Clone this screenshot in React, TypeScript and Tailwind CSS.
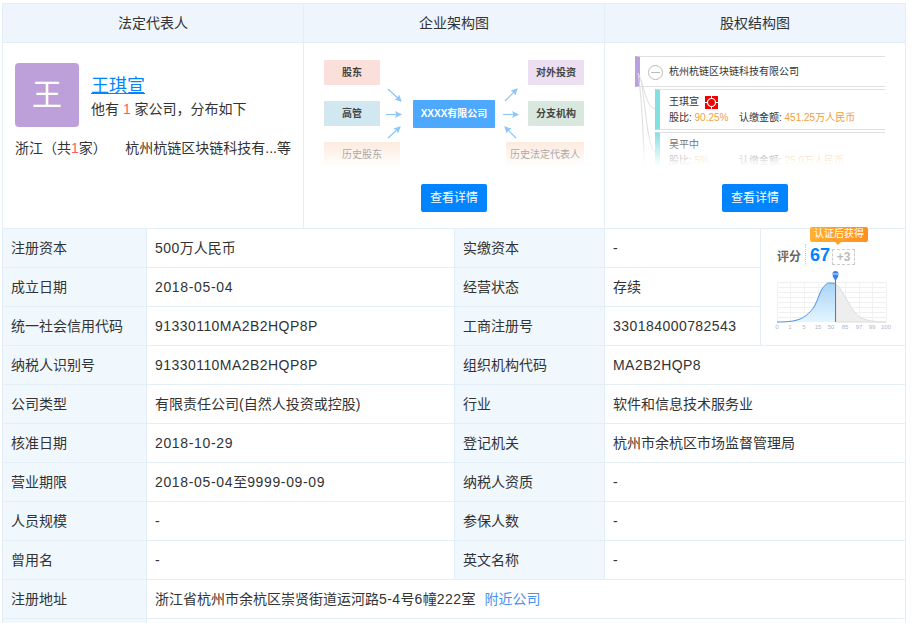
import type { ReactNode } from "react";

const FONT = "font-['Liberation_Sans','Noto_Sans_CJK_SC',sans-serif]";

function Label({ children }: { children?: ReactNode }) {
  return (
    <div className="flex items-center border-r border-b border-[#e4eef6] bg-[#f0f7fd] pl-2 text-[#333]">
      {children}
    </div>
  );
}

function Value({ children, className = "" }: { children?: ReactNode; className?: string }) {
  return (
    <div className={`flex items-center border-r border-b border-[#e4eef6] pl-2 text-[#333] ${className}`}>
      {children}
    </div>
  );
}

// latin and digits run a little wider than the cjk text around them
function Num({ children }: { children: ReactNode }) {
  return <span className="tracking-[0.45px]">{children}</span>;
}

function Day({ children }: { children: ReactNode }) {
  return <span className="tracking-[0.65px]">{children}</span>;
}

function DetailButton() {
  return (
    <button className="flex h-7 w-[66px] items-center justify-center rounded-[2px] bg-[#0084ff] text-xs text-white">
      查看详情
    </button>
  );
}

function OrgNode({ className, children }: { className: string; children: ReactNode }) {
  return (
    <div className={`absolute flex items-center justify-center rounded-[1px] pt-px text-[10px] font-bold text-[#444] ${className}`}>
      {children}
    </div>
  );
}

function OrgChart() {
  return (
    <div className="relative h-[110px] w-full">
      <OrgNode className="top-0 left-[20px] h-[25px] w-[56px] bg-[#fadfdb]">股东</OrgNode>
      <OrgNode className="top-[41px] left-[20px] h-[25px] w-[56px] bg-[#d1e8f0]">高管</OrgNode>
      <OrgNode className="top-[82px] left-[20px] h-[25px] w-[76px] bg-gradient-to-b from-[#fdeade] to-white font-normal text-[#aaa]">
        历史股东
      </OrgNode>
      <OrgNode className="top-[40px] left-[109px] h-[28px] w-[82px] bg-[#4da9ff] text-white">XXXX有限公司</OrgNode>
      <OrgNode className="top-0 left-[224px] h-[25px] w-[56px] bg-[#ecdff2]">对外投资</OrgNode>
      <OrgNode className="top-[41px] left-[224px] h-[25px] w-[56px] bg-[#d9e8df]">分支机构</OrgNode>
      <OrgNode className="top-[82px] left-[202px] h-[25px] w-[78px] bg-gradient-to-b from-[#fdeade] to-white font-normal text-[#aaa]">
        历史法定代表人
      </OrgNode>
      <svg className="absolute top-0 left-0" width="300" height="110" fill="none" stroke="#8cc6fb" strokeWidth="1.200">
        <defs>
          <marker id="arrow" markerUnits="userSpaceOnUse" markerWidth="7" markerHeight="7" refX="6" refY="3.500" orient="auto">
            <path d="M0 0L7 3.500L0 7L1.500 3.500z" fill="#8cc6fb" stroke="none" />
          </marker>
        </defs>
        <path d="M84 29L97 41" markerEnd="url(#arrow)" />
        <path d="M82 54.500H97" markerEnd="url(#arrow)" />
        <path d="M84 78L96 67" markerEnd="url(#arrow)" />
        <path d="M201 41L213 29" markerEnd="url(#arrow)" />
        <path d="M199 54.500H214" markerEnd="url(#arrow)" />
        <path d="M212 78L201 67" markerEnd="url(#arrow)" />
      </svg>
    </div>
  );
}

function RedBadge() {
  return (
    <svg width="13" height="13" viewBox="0 0 13 13" className="ml-[6px]">
      <rect width="13" height="13" fill="#f00000" />
      <circle cx="6.500" cy="6.500" r="4" fill="#f00000" stroke="#fff" strokeWidth="1.200" />
      <path d="M6.500 0V2M6.500 11V13M0 6.500H2M11 6.500H13" stroke="#fff" strokeWidth="1" />
    </svg>
  );
}

function HolderRow({ name, ratio, amount, badge }: { name: string; ratio: string; amount: string; badge?: boolean }) {
  return (
    <div className="mt-[2px] ml-[20px] h-[41px] border-y border-[#e0e0e0] border-l-[5px] border-l-[#84dfe3] pl-[9px] text-[10px] leading-[16px] text-[#333]">
      <div className="mt-[4px] flex items-center text-[#333]">
        {name}
        {badge && <RedBadge />}
      </div>
      <div className="flex whitespace-nowrap">
        <span className="w-[70px]">
          股比: <span className="text-[#f0a040]">{ratio}</span>
        </span>
        <span>
          认缴金额: <span className="text-[#f0a040]">{amount}</span>
        </span>
      </div>
    </div>
  );
}

function EquityChart() {
  return (
    <div className="relative ml-[30px] h-[110px] w-[250px] overflow-hidden">
      <svg className="absolute top-0 left-0" width="30" height="110" fill="none" stroke="#ddd">
        <path d="M3 17C10 30 10 50 20 53" />
        <path d="M6 24C10 45 12 90 20 96" />
        <path d="M3 17C8 50 8 90 10 110" />
      </svg>
      <div className="flex h-[31px] items-center border-y border-[#e0e0e0] border-l-[5px] border-l-[#b9a0e0] pt-px pl-[8px] text-[10px] text-[#333]">
        <span className="mr-[6px] flex h-[15px] w-[15px] items-center justify-center rounded-full border border-[#bbb]">
          <span className="h-px w-[9px] bg-[#bbb]" />
        </span>
        杭州杭链区块链科技有限公司
      </div>
      <HolderRow name="王琪宣" ratio="90.25%" amount="451.25万人民币" badge />
      <HolderRow name="吴平中" ratio="5%" amount="25.0万人民币" />
      <div className="absolute right-0 bottom-0 left-0 h-[34px] bg-gradient-to-b from-white/0 to-white" />
    </div>
  );
}

function ScoreChart() {
  const ticks = ["0", "1", "5", "15", "50", "85", "97", "99", "100"];
  const columns = [0, 13, 27, 41, 54, 68, 82, 95, 109];
  return (
    <svg width="109" height="60" viewBox="0 0 109 60" className="mt-[1px] block overflow-visible">
      <defs>
        <linearGradient id="bell" x1="0" y1="0" x2="0" y2="1">
          <stop offset="0" stopColor="#a9d4f8" />
          <stop offset="1" stopColor="#e4f5fe" />
        </linearGradient>
      </defs>
      {[11, 16, 21, 26, 31, 36, 41, 46].map((y) => (
        <path key={y} d={`M0 ${y}.5H109`} stroke="#f0f0f0" />
      ))}
      {columns.map((x) => (
        <path key={x} d={`M${x}.5 11V51`} stroke="#f2f2f2" />
      ))}
      <path d="M59 13C64 17 66 23 70 29C74 36 78 43 83 46C90 50 98 51 109 51H59Z" fill="#eeeeee" stroke="#dddddd" />
      <path d="M0 51C12 51 18 50 23 48C30 45 34 40 37 36C41 29 42 23 45 18C48 14 50 12 52 12C55 12 57 12 59 13V51Z" fill="url(#bell)" />
      <path d="M0 51C12 51 18 50 23 48C30 45 34 40 37 36C41 29 42 23 45 18C48 14 50 12 52 12C55 12 57 12 59 13" fill="none" stroke="#4a90e8" />
      <path d="M58.500 6V51" stroke="#3a80e8" />
      <circle cx="58.500" cy="3" r="3" fill="#3a80e8" />
      <path d="M55.500 5H61.500L58.500 10Z" fill="#3a80e8" />
      <path d="M56 3H61" stroke="#fff" strokeWidth="0.800" />
      {ticks.map((t, i) => (
        <text key={t} x={columns[i]} y="58" fontSize="6" fill="#aab8cc" textAnchor="middle">
          {t}
        </text>
      ))}
    </svg>
  );
}

function ScoreCell() {
  return (
    <div className="relative row-span-3 border-r border-b border-[#e4eef6] pl-4">
      <div className="absolute -top-[2px] left-[49px] flex h-[15px] w-[58px] items-center justify-center rounded-[2px] bg-gradient-to-r from-[#ffb032] to-[#ff8f1f] text-[10px] text-white">
        认证后获得
        <span className="absolute -bottom-[3px] left-[25px] border-x-[3px] border-t-[3px] border-x-transparent border-t-[#ff9f28]" />
      </div>
      <div className="flex h-[41px] items-end pb-[3px]">
        <span className="mb-[2px] w-[28px] text-xs font-bold text-[#666]">评分</span>
        <span className="mb-px border-l border-dotted border-[#ccc] pl-[4px] text-lg leading-[22px] font-bold text-[#0084ff]">67</span>
        <span className="mb-[2px] ml-[2px] flex h-[16px] w-[23px] items-center justify-center border border-dashed border-[#ccc] text-xs font-bold text-[#bbb]">
          +3
        </span>
      </div>
      <ScoreChart />
    </div>
  );
}

export default function App() {
  return (
    <div className={`h-[623px] overflow-hidden bg-white pt-[3px] pl-[2px] text-sm ${FONT}`}>
      <div className="w-[904px] border-t border-l border-[#e4eef6]">
        <div className="grid grid-cols-3">
          <div className="flex h-[225px] flex-col border-r border-b border-[#e4eef6]">
            <div className="flex h-[39px] items-center justify-center border-b border-[#e4eef6] bg-[#eef5fc] text-[#333]">法定代表人</div>
            <div className="px-3 pt-5 text-[#333]">
              <div className="flex items-center">
                <div className="flex h-16 w-16 items-center justify-center rounded bg-[#bd9fd9] text-[30px] text-white">王</div>
                <div className="ml-3">
                  <div className="pt-[3px] text-lg leading-[24px] text-[#0084ff] underline">王琪宣</div>
                  <div className="leading-[22px]">
                    他有 <span className="text-[#ff5a5f]">1</span> 家公司，分布如下
                  </div>
                </div>
              </div>
              <div className="mt-[11px] flex justify-between whitespace-nowrap">
                <span>
                  浙江（共<span className="text-[#ff5a5f]">1</span>家）
                </span>
                <span>杭州杭链区块链科技有...等</span>
              </div>
            </div>
          </div>
          <div className="flex h-[225px] flex-col border-r border-b border-[#e4eef6]">
            <div className="flex h-[39px] items-center justify-center border-b border-[#e4eef6] bg-[#eef5fc] text-[#333]">企业架构图</div>
            <div className="flex flex-col items-center pt-[17px]">
              <OrgChart />
              <div className="mt-[14px]">
                <DetailButton />
              </div>
            </div>
          </div>
          <div className="flex h-[225px] flex-col border-r border-b border-[#e4eef6]">
            <div className="flex h-[39px] items-center justify-center border-b border-[#e4eef6] bg-[#eef5fc] text-[#333]">股权结构图</div>
            <div className="flex flex-col items-center pt-[13px]">
              <div className="w-full">
                <EquityChart />
              </div>
              <div className="mt-[18px]">
                <DetailButton />
              </div>
            </div>
          </div>
        </div>
        <div className="grid grid-cols-[144px_308px_150px_156px_145px] auto-rows-[39px]">
          <Label>注册资本</Label>
          <Value><Num>500</Num>万人民币</Value>
          <Label>实缴资本</Label>
          <Value>-</Value>
          <ScoreCell />
          <Label>成立日期</Label>
          <Value><Day>2018-05-04</Day></Value>
          <Label>经营状态</Label>
          <Value>存续</Value>
          <Label>统一社会信用代码</Label>
          <Value><Num>91330110MA2B2HQP8P</Num></Value>
          <Label>工商注册号</Label>
          <Value><Num>330184000782543</Num></Value>
          <Label>纳税人识别号</Label>
          <Value><Num>91330110MA2B2HQP8P</Num></Value>
          <Label>组织机构代码</Label>
          <Value className="col-span-2"><Num>MA2B2HQP8</Num></Value>
          <Label>公司类型</Label>
          <Value>有限责任公司(自然人投资或控股)</Value>
          <Label>行业</Label>
          <Value className="col-span-2">软件和信息技术服务业</Value>
          <Label>核准日期</Label>
          <Value><Day>2018-10-29</Day></Value>
          <Label>登记机关</Label>
          <Value className="col-span-2">杭州市余杭区市场监督管理局</Value>
          <Label>营业期限</Label>
          <Value><Day>2018-05-04</Day>至<Day>9999-09-09</Day></Value>
          <Label>纳税人资质</Label>
          <Value className="col-span-2">-</Value>
          <Label>人员规模</Label>
          <Value>-</Value>
          <Label>参保人数</Label>
          <Value className="col-span-2">-</Value>
          <Label>曾用名</Label>
          <Value>-</Value>
          <Label>英文名称</Label>
          <Value className="col-span-2">-</Value>
          <Label>注册地址</Label>
          <Value className="col-span-4">
            浙江省杭州市余杭区崇贤街道运河路<Num>5-4</Num>号<Num>6</Num>幢<Num>222</Num>室
            <a className="ml-[9px] text-[#4a90f0]">附近公司</a>
          </Value>
          <Label />
          <Value className="col-span-4" />
        </div>
      </div>
    </div>
  );
}
